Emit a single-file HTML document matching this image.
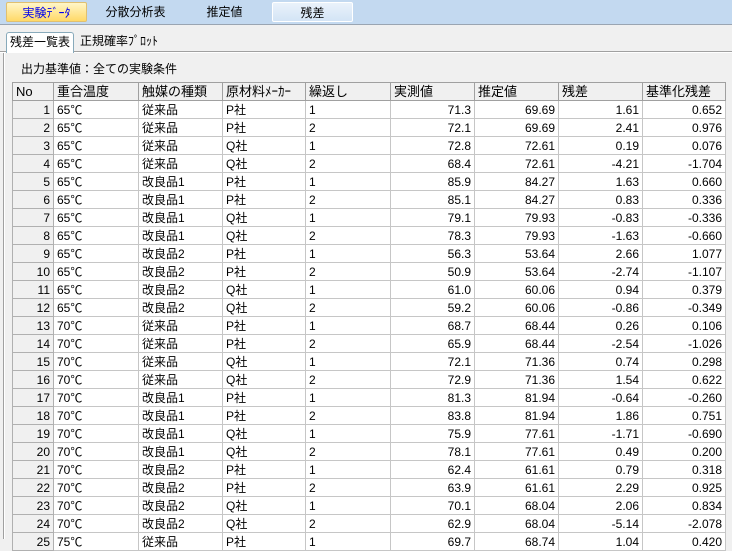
<!DOCTYPE html>
<html><head><meta charset="utf-8"><style>
*{margin:0;padding:0;box-sizing:border-box}
body{width:732px;height:539px;overflow:hidden;background:#f0f0f0;font-family:"Liberation Sans","Noto Sans CJK JP",sans-serif;font-size:12px;color:#000;position:relative}
.top{position:absolute;left:0;top:0;width:732px;height:25px;background:#c3d9f0;border-bottom:1px solid #9aa5b2}
.tt{position:absolute;top:2px;height:20px;line-height:20px;text-align:center;font-size:12px}
.t1{left:6px;width:81px;background:linear-gradient(#fff6c8,#ffd968);border:1px solid #e0c070;border-radius:2px;color:#0000ee}
.t4{left:272px;width:81px;background:linear-gradient(#eaf2fb,#d3e4f5);border:1px solid #fff;border-radius:2px}
.sub{position:absolute;left:0;top:51px;width:732px;height:2px;border-top:1px solid #a0a0a0;border-bottom:1px solid #fff}
.st{position:absolute;top:32px;height:20px;line-height:19px;font-size:12px;padding:0 3px}
.s1{left:6px;width:68px;background:#fff;border:1px solid #8ab;border-bottom:none;border-radius:3px 3px 0 0;z-index:2;height:21px}
.lb{position:absolute;left:3px;top:53px;width:2px;height:486px;border-left:1px solid #a0a0a0;border-right:1px solid #fff}
.cap{position:absolute;left:21px;top:60px;font-size:12px}
table{position:absolute;left:12px;top:82px;border-collapse:collapse;table-layout:fixed}
td{height:18px;border:1px solid #c6c6c6;background:#fff;padding:0 3px;white-space:nowrap;overflow:hidden;font-size:12px;line-height:16px}
tr.h td{background:#f0f0f0;border-color:#a0a0a0;font-size:13px}
td.n{background:#f0f0f0;text-align:right;border-color:#b0b0b0}
td.r{text-align:right}
</style></head><body>
<div class="top">
<div class="tt t1">実験ﾃﾞｰﾀ</div>
<div class="tt" style="left:95px;width:81px">分散分析表</div>
<div class="tt" style="left:184px;width:81px">推定値</div>
<div class="tt t4">残差</div>
</div>
<div class="st s1">残差一覧表</div>
<div class="st" style="left:77px">正規確率ﾌﾟﾛｯﾄ</div>
<div class="sub"></div>
<div class="lb"></div>
<div class="cap">出力基準値：全ての実験条件</div>
<table>
<colgroup><col style="width:41px"><col style="width:85px"><col style="width:84px"><col style="width:83px"><col style="width:85px"><col style="width:84px"><col style="width:84px"><col style="width:84px"><col style="width:83px"></colgroup>
<tr class="h"><td>No</td><td>重合温度</td><td>触媒の種類</td><td>原材料ﾒｰｶｰ</td><td>繰返し</td><td>実測値</td><td>推定値</td><td>残差</td><td>基準化残差</td></tr>
<tr><td class="n">1</td><td>65℃</td><td>従来品</td><td>P社</td><td>1</td><td class="r">71.3</td><td class="r">69.69</td><td class="r">1.61</td><td class="r">0.652</td></tr>
<tr><td class="n">2</td><td>65℃</td><td>従来品</td><td>P社</td><td>2</td><td class="r">72.1</td><td class="r">69.69</td><td class="r">2.41</td><td class="r">0.976</td></tr>
<tr><td class="n">3</td><td>65℃</td><td>従来品</td><td>Q社</td><td>1</td><td class="r">72.8</td><td class="r">72.61</td><td class="r">0.19</td><td class="r">0.076</td></tr>
<tr><td class="n">4</td><td>65℃</td><td>従来品</td><td>Q社</td><td>2</td><td class="r">68.4</td><td class="r">72.61</td><td class="r">-4.21</td><td class="r">-1.704</td></tr>
<tr><td class="n">5</td><td>65℃</td><td>改良品1</td><td>P社</td><td>1</td><td class="r">85.9</td><td class="r">84.27</td><td class="r">1.63</td><td class="r">0.660</td></tr>
<tr><td class="n">6</td><td>65℃</td><td>改良品1</td><td>P社</td><td>2</td><td class="r">85.1</td><td class="r">84.27</td><td class="r">0.83</td><td class="r">0.336</td></tr>
<tr><td class="n">7</td><td>65℃</td><td>改良品1</td><td>Q社</td><td>1</td><td class="r">79.1</td><td class="r">79.93</td><td class="r">-0.83</td><td class="r">-0.336</td></tr>
<tr><td class="n">8</td><td>65℃</td><td>改良品1</td><td>Q社</td><td>2</td><td class="r">78.3</td><td class="r">79.93</td><td class="r">-1.63</td><td class="r">-0.660</td></tr>
<tr><td class="n">9</td><td>65℃</td><td>改良品2</td><td>P社</td><td>1</td><td class="r">56.3</td><td class="r">53.64</td><td class="r">2.66</td><td class="r">1.077</td></tr>
<tr><td class="n">10</td><td>65℃</td><td>改良品2</td><td>P社</td><td>2</td><td class="r">50.9</td><td class="r">53.64</td><td class="r">-2.74</td><td class="r">-1.107</td></tr>
<tr><td class="n">11</td><td>65℃</td><td>改良品2</td><td>Q社</td><td>1</td><td class="r">61.0</td><td class="r">60.06</td><td class="r">0.94</td><td class="r">0.379</td></tr>
<tr><td class="n">12</td><td>65℃</td><td>改良品2</td><td>Q社</td><td>2</td><td class="r">59.2</td><td class="r">60.06</td><td class="r">-0.86</td><td class="r">-0.349</td></tr>
<tr><td class="n">13</td><td>70℃</td><td>従来品</td><td>P社</td><td>1</td><td class="r">68.7</td><td class="r">68.44</td><td class="r">0.26</td><td class="r">0.106</td></tr>
<tr><td class="n">14</td><td>70℃</td><td>従来品</td><td>P社</td><td>2</td><td class="r">65.9</td><td class="r">68.44</td><td class="r">-2.54</td><td class="r">-1.026</td></tr>
<tr><td class="n">15</td><td>70℃</td><td>従来品</td><td>Q社</td><td>1</td><td class="r">72.1</td><td class="r">71.36</td><td class="r">0.74</td><td class="r">0.298</td></tr>
<tr><td class="n">16</td><td>70℃</td><td>従来品</td><td>Q社</td><td>2</td><td class="r">72.9</td><td class="r">71.36</td><td class="r">1.54</td><td class="r">0.622</td></tr>
<tr><td class="n">17</td><td>70℃</td><td>改良品1</td><td>P社</td><td>1</td><td class="r">81.3</td><td class="r">81.94</td><td class="r">-0.64</td><td class="r">-0.260</td></tr>
<tr><td class="n">18</td><td>70℃</td><td>改良品1</td><td>P社</td><td>2</td><td class="r">83.8</td><td class="r">81.94</td><td class="r">1.86</td><td class="r">0.751</td></tr>
<tr><td class="n">19</td><td>70℃</td><td>改良品1</td><td>Q社</td><td>1</td><td class="r">75.9</td><td class="r">77.61</td><td class="r">-1.71</td><td class="r">-0.690</td></tr>
<tr><td class="n">20</td><td>70℃</td><td>改良品1</td><td>Q社</td><td>2</td><td class="r">78.1</td><td class="r">77.61</td><td class="r">0.49</td><td class="r">0.200</td></tr>
<tr><td class="n">21</td><td>70℃</td><td>改良品2</td><td>P社</td><td>1</td><td class="r">62.4</td><td class="r">61.61</td><td class="r">0.79</td><td class="r">0.318</td></tr>
<tr><td class="n">22</td><td>70℃</td><td>改良品2</td><td>P社</td><td>2</td><td class="r">63.9</td><td class="r">61.61</td><td class="r">2.29</td><td class="r">0.925</td></tr>
<tr><td class="n">23</td><td>70℃</td><td>改良品2</td><td>Q社</td><td>1</td><td class="r">70.1</td><td class="r">68.04</td><td class="r">2.06</td><td class="r">0.834</td></tr>
<tr><td class="n">24</td><td>70℃</td><td>改良品2</td><td>Q社</td><td>2</td><td class="r">62.9</td><td class="r">68.04</td><td class="r">-5.14</td><td class="r">-2.078</td></tr>
<tr><td class="n">25</td><td>75℃</td><td>従来品</td><td>P社</td><td>1</td><td class="r">69.7</td><td class="r">68.74</td><td class="r">1.04</td><td class="r">0.420</td></tr>
</table>
</body></html>
